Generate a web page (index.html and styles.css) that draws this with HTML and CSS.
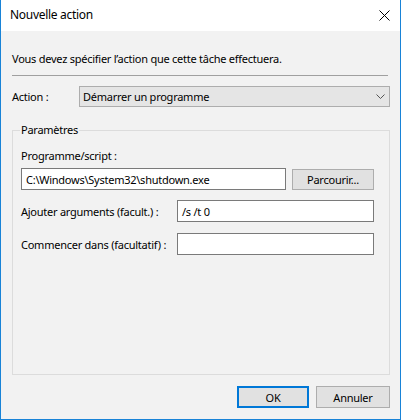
FILE: index.html
```html
<!DOCTYPE html>
<html lang="fr">
<head>
<meta charset="utf-8">
<title>Nouvelle action</title>
<link rel="stylesheet" href="styles.css">
</head>
<body>
<div class="window">
  <div class="titlebar">
    <span class="title">Nouvelle action</span>
    <svg class="close" width="11" height="11" viewBox="0 0 11 11"><path d="M0.5 0.5 L10.5 10.5 M10.5 0.5 L0.5 10.5" stroke="#000" stroke-width="1" fill="none"/></svg>
  </div>
  <div class="content">
    <p class="intro">Vous devez spécifier l’action que cette tâche effectuera.</p>
    <div class="sep"></div>
    <div class="action-row">
      <span class="action-label">Action :</span>
      <div class="combo">
        <span>Démarrer un programme</span>
        <svg class="chev" width="9" height="5" viewBox="0 0 9 5"><path d="M0.5 0.5 L4.5 4.5 L8.5 0.5" stroke="#555" stroke-width="1" fill="none"/></svg>
      </div>
    </div>
    <fieldset class="group">
      <legend>Paramètres</legend>
      <div class="lbl-top">Programme/script :</div>
      <div class="prog-row">
        <div class="field prog">C:\Windows\System32\shutdown.exe</div>
        <div class="btn browse">Parcourir...</div>
      </div>
      <div class="grid">
        <span class="lbl">Ajouter arguments (facult.) :</span>
        <div class="field">/s /t 0</div>
        <span class="lbl">Commencer dans (facultatif) :</span>
        <div class="field"></div>
      </div>
    </fieldset>
    <div class="footer">
      <div class="btn ok">OK</div>
      <div class="btn cancel">Annuler</div>
    </div>
  </div>
</div>
</body>
</html>
```

FILE: styles.css
```css
* { box-sizing: border-box; }
html, body { margin: 0; padding: 0; }
body {
  font-family: "Noto Sans", "Open Sans", sans-serif;
  font-size: 11px;
  letter-spacing: -0.25px;
  color: #000;
}
.window {
  width: 401px;
  height: 420px;
  background: #f2f2f2;
  border: 1px solid #1883d7;
  border-top: none;
  display: flex;
  flex-direction: column;
}
.titlebar {
  height: 31px;
  background: #fff;
  display: flex;
  align-items: center;
  justify-content: space-between;
  padding: 0 10px 1px 9px;
}
.title {
  font-size: 12px;
  letter-spacing: -0.3px;
  line-height: 16px;
}
.close { display: block; }
.content {
  flex: 1;
  display: flex;
  flex-direction: column;
  padding: 0 10px 11px 11px;
}
.intro {
  margin: 20px 0 0 0;
  line-height: 16px;
}
.sep {
  height: 1px;
  background: #a0a0a0;
  margin: 8px 2px 0 0;
}
.action-row {
  display: flex;
  align-items: center;
  margin-top: 10px;
  height: 21px;
}
.action-label { width: 67px; }
.combo {
  flex: 1;
  height: 21px;
  background: #e5e5e5;
  border: 1px solid #adadad;
  display: flex;
  align-items: center;
  justify-content: space-between;
  padding: 0 4px 0 3px;
}
.chev { display: block; }
.group {
  flex: 1;
  margin: 15px 0 0 0;
  border: 1px solid #dcdcdc;
  padding: 0 14px 0 8px;
  min-width: 0;
}
.group legend {
  padding: 0 1px;
  margin-left: -1px;
  line-height: 16px;
}
.lbl-top {
  margin-top: 10px;
  line-height: 16px;
}
.prog-row {
  display: flex;
  align-items: center;
  margin-top: 4px;
  gap: 6px;
}
.field {
  height: 22px;
  background: #fff;
  border: 1px solid #7a7a7a;
  display: flex;
  align-items: center;
  padding: 0 4px;
  white-space: nowrap;
}
.prog { width: 265px; }
.btn {
  height: 22px;
  background: #e1e1e1;
  border: 1px solid #adadad;
  display: flex;
  align-items: center;
  justify-content: center;
}
.browse { width: 82px; height: 21px; }
.grid {
  display: grid;
  grid-template-columns: 156px 197px;
  row-gap: 11px;
  align-items: center;
  margin-top: 10px;
}
.footer {
  display: flex;
  justify-content: flex-end;
  gap: 7px;
  margin-top: 11px;
}
.ok { width: 72px; border: 2px solid #0078d7; }
.cancel { width: 74px; }
```
